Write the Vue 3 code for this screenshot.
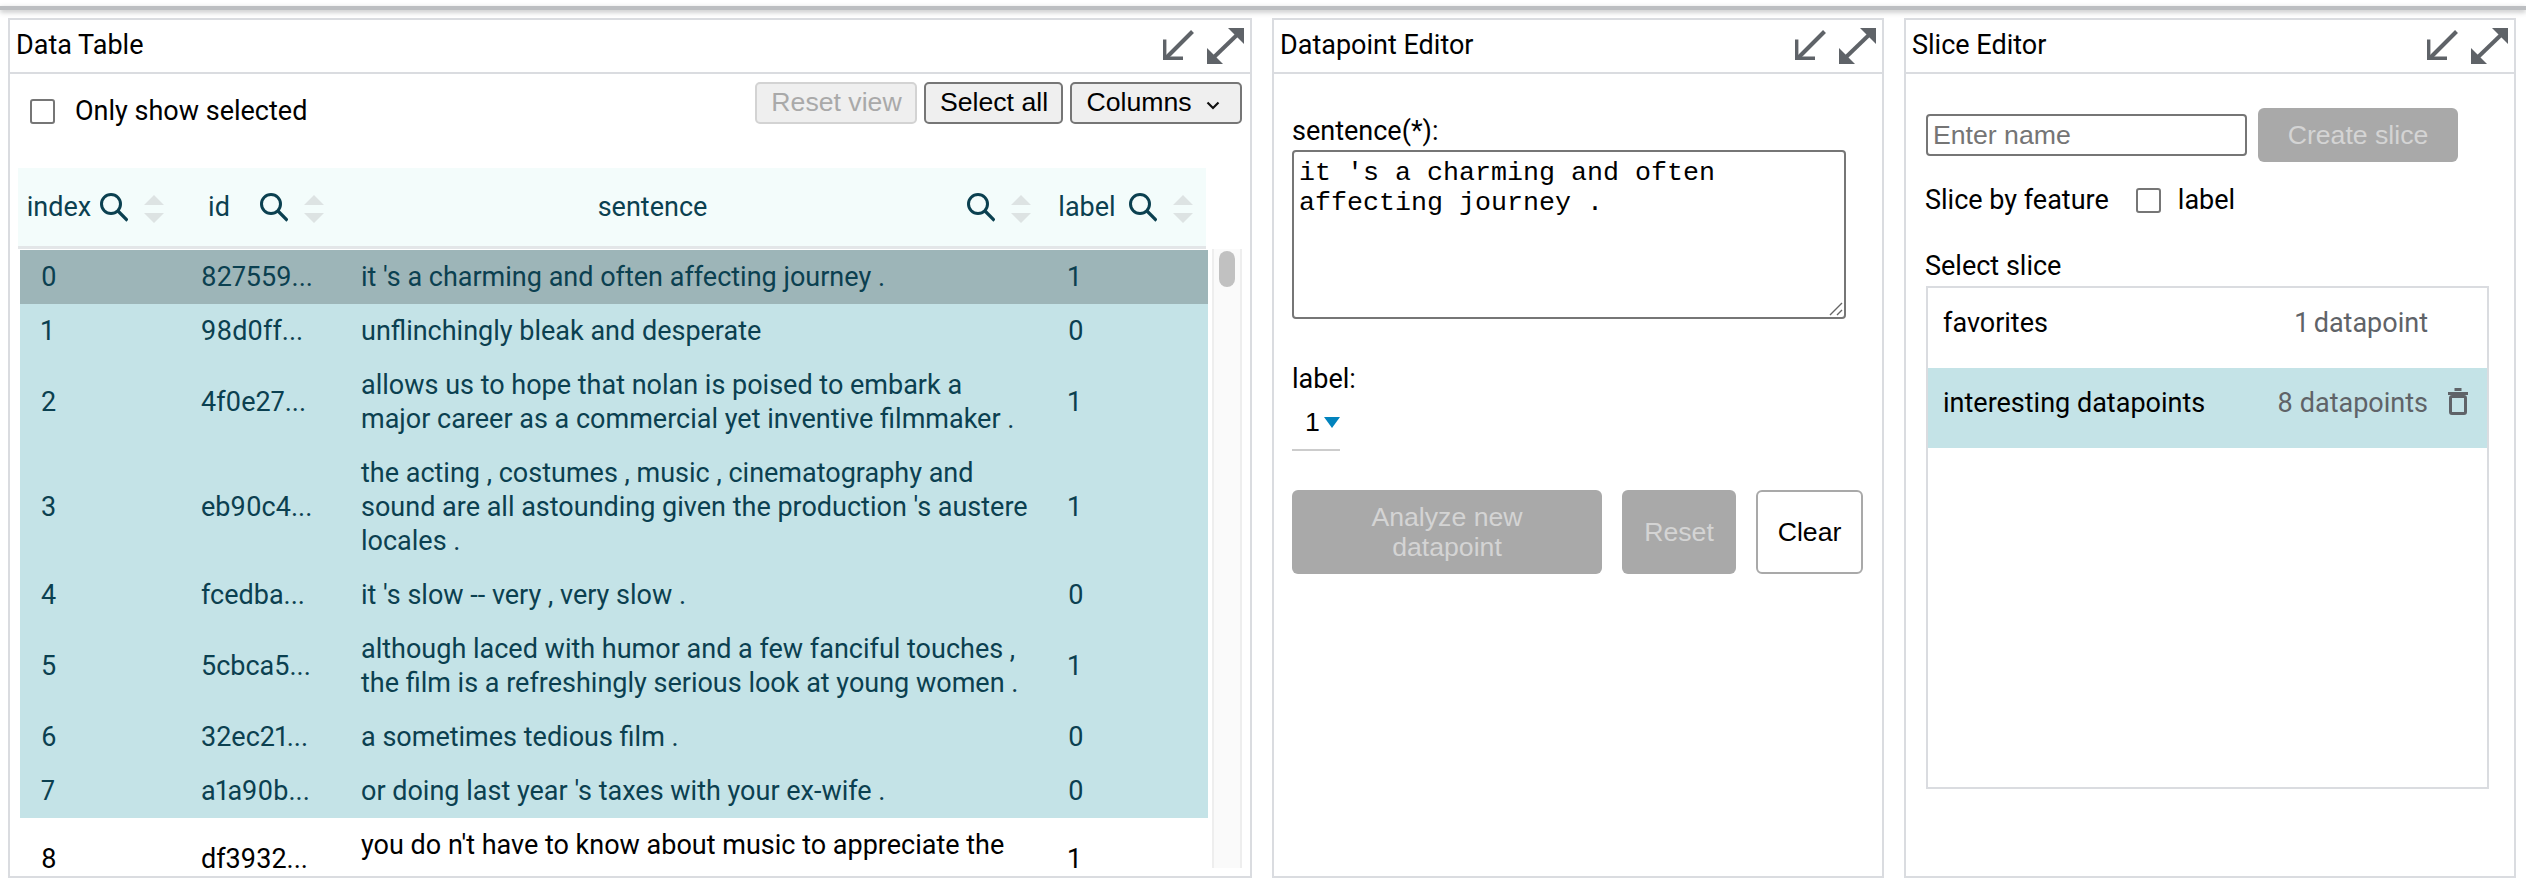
<script setup>
const rows = [
  { i: 0, id: '827559...', s: ["it 's a charming and often affecting journey ."], l: 1, c: 'primary' },
  { i: 1, id: '98d0ff...', s: ['unflinchingly bleak and desperate'], l: 0, c: 'sel' },
  { i: 2, id: '4f0e27...', s: ['allows us to hope that nolan is poised to embark a', 'major career as a commercial yet inventive filmmaker .'], l: 1, c: 'sel' },
  { i: 3, id: 'eb90c4...', s: ['the acting , costumes , music , cinematography and', "sound are all astounding given the production 's austere", 'locales .'], l: 1, c: 'sel' },
  { i: 4, id: 'fcedba...', s: ["it 's slow -- very , very slow ."], l: 0, c: 'sel' },
  { i: 5, id: '5cbca5...', s: ['although laced with humor and a few fanciful touches ,', 'the film is a refreshingly serious look at young women .'], l: 1, c: 'sel' },
  { i: 6, id: '32ec21...', s: ['a sometimes tedious film .'], l: 0, c: 'sel' },
  { i: 7, id: 'a1a90b...', s: ["or doing last year 's taxes with your ex-wife ."], l: 0, c: 'sel' },
  { i: 8, id: 'df3932...', s: ["you do n't have to know about music to appreciate the"], l: 1, c: 'tall' },
]
const cols = ['index', 'id', 'sentence', 'label']
const panels = ['Data Table', 'Datapoint Editor', 'Slice Editor']
</script>

<template>
  <div class="page">
    <div class="topbar"></div>
    <div class="panels">
      <section v-for="(title, p) in panels" :key="title" class="panel" :class="'p' + p">
        <header class="phead">
          <span class="ptitle">{{ title }}</span>
          <span class="picons">
            <svg class="ic-min" viewBox="0 0 31 30"><path d="M29.5 1.5 3 28" fill="none" stroke="#5f6368" stroke-width="4"/><path d="M1.7 9.5v18.8H20" fill="none" stroke="#5f6368" stroke-width="3.4"/></svg>
            <svg class="ic-max" viewBox="0 0 37 36"><path d="M5 31 32 5" fill="none" stroke="#5f6368" stroke-width="4"/><path d="M21 0h16v16zM0 20v16h16z" fill="#5f6368"/></svg>
          </span>
        </header>

        <div v-if="p === 0" class="tbody">
          <div class="toolbar">
            <label class="only"><span class="check"></span><span>Only show selected</span></label>
            <div class="tbtns">
              <button class="gbtn disabled">Reset view</button>
              <button class="gbtn selectall">Select all</button>
              <button class="gbtn columns">Columns
                <svg viewBox="0 0 14 9" class="chev"><path d="M1.5 1.5 7 7l5.5-5.5" fill="none" stroke="#111" stroke-width="2.2"/></svg>
              </button>
            </div>
          </div>
          <div class="thead">
            <div v-for="c in cols" :key="c" class="th">
              <span class="thlabel">{{ c }}</span>
              <svg class="search" viewBox="0 0 28 29"><circle cx="11" cy="11" r="9.5" fill="none" stroke="#0b4050" stroke-width="3"/><path d="M18 18 27.5 27.5" stroke="#0b4050" stroke-width="3.2" fill="none"/></svg>
              <svg class="sort" viewBox="0 0 20 28"><path d="M10 0 20 10H0zM10 28 0 18h20z" fill="#dde3e3"/></svg>
            </div>
          </div>
          <div class="tscroll">
            <div class="rows">
              <div v-for="r in rows" :key="r.i" class="row" :class="r.c">
                <span class="td">{{ r.i }}</span>
                <span class="td">{{ r.id }}</span>
                <span class="td sent"><span v-for="(line, n) in r.s" :key="n" class="line">{{ line }}</span></span>
                <span class="td">{{ r.l }}</span>
              </div>
            </div>
            <div class="track"><div class="thumb"></div></div>
          </div>
        </div>

        <div v-else-if="p === 1" class="dbody">
          <div class="flabel">sentence(*):</div>
          <div class="textarea">
            <div>it 's a charming and often</div>
            <div>affecting journey .</div>
            <svg class="grip" viewBox="0 0 14 14"><path d="M1 13 13 1M8 13l5-5" stroke="#666" stroke-width="1.4" fill="none"/></svg>
          </div>
          <div class="flabel second">label:</div>
          <div class="select"><span class="one">1</span><svg viewBox="0 0 16 11" class="tri"><path d="M0 0h16L8 11z" fill="#0283bd"/></svg></div>
          <div class="dbtns">
            <button class="abtn off analyze">Analyze new<br />datapoint</button>
            <button class="abtn off reset">Reset</button>
            <button class="abtn clear">Clear</button>
          </div>
        </div>

        <div v-else class="sbody">
          <div class="createrow">
            <div class="nameinput">Enter name</div>
            <button class="abtn off create">Create slice</button>
          </div>
          <div class="byfeature"><span>Slice by feature</span><span class="check"></span><span>label</span></div>
          <div class="seltitle">Select slice</div>
          <div class="slist">
            <div class="sitem"><span class="sname">favorites</span><span class="scount">1 datapoint</span><span class="trashslot"></span></div>
            <div class="sitem on"><span class="sname">interesting datapoints</span><span class="scount">8 datapoints</span>
              <svg class="trashslot" viewBox="0 0 20 27"><path d="M6.5 1.5h7M0 5.5h20" stroke="#5f6368" stroke-width="3" fill="none"/><rect x="2.5" y="8.5" width="15" height="17" rx="1.5" fill="none" stroke="#5f6368" stroke-width="3"/></svg>
            </div>
          </div>
        </div>
      </section>
    </div>
  </div>
</template>

<style>
html, body { margin: 0; background: #fff; }
</style>

<style scoped>
.page { width: 2526px; height: 886px; overflow: hidden; font-family: Roboto, "Liberation Sans", sans-serif; font-size: 27px; color: #000; font-variant-numeric: proportional-nums; }
.topbar { height: 4px; margin-top: 6px; background: #bcbec1; box-shadow: 0 2px 5px rgba(60,64,67,.35); }
.panels { display: flex; margin: 8px 0 0 8px; gap: 20px; height: 860px; }
.panel { box-sizing: border-box; height: 860px; border: 2px solid #dadce0; display: flex; flex-direction: column; overflow: hidden; }
.p0 { width: 1244px; }
.p1 { width: 612px; }
.p2 { width: 612px; }
.phead { box-sizing: border-box; height: 54px; flex: none; border-bottom: 2px solid #dadce0; display: flex; justify-content: space-between; align-items: center; padding: 0 6px; }
.ptitle { margin-top: -3px; }
.picons { display: flex; gap: 13px; align-items: center; }
.ic-min { width: 31px; height: 30px; margin-bottom: 2px; }
.ic-max { width: 37px; height: 36px; }

.check { box-sizing: border-box; display: inline-block; width: 25px; height: 25px; border: 2px solid #767676; border-radius: 3px; background: #fff; flex: none; }
.tbody { display: flex; flex-direction: column; flex: 1; min-height: 0; }
.toolbar { display: flex; justify-content: space-between; height: 94px; flex: none; padding: 8px 8px 0 20px; box-sizing: border-box; }
.only { display: flex; align-items: center; gap: 20px; height: 42px; margin-top: 8px; }
.tbtns { display: flex; gap: 7px; height: 42px; }
.gbtn { box-sizing: border-box; width: 162px; height: 42px; padding: 0 0 1px 1px; border: 2px solid #767676; border-radius: 5px; background: #efefef; color: #000; font: 26.67px "Liberation Sans", Arial, sans-serif; display: flex; align-items: center; justify-content: center; }
.gbtn.disabled { border-color: #d3d3d3; color: #a9a9a9; }
.selectall { width: 139px; }
.columns { width: 172px; gap: 14px; padding-right: 6px; padding-left: 0; }
.chev { width: 14px; height: 9px; margin-top: 6px; flex: none; }

.thead { display: grid; grid-template-columns: 160px 160px 707px 159px; width: 1188px; box-sizing: border-box; margin-left: 8px; padding-left: 2px; height: 81px; background: #f3fcfb; border-bottom: 3px solid #e3e6e8; flex: none; color: #0b4050; }
.th { display: flex; align-items: center; padding: 0 16px 0 6px; }
.th:last-child { padding-right: 13px; }
.thlabel { flex: 1; text-align: center; }
.search { width: 28px; height: 29px; margin-left: 8px; margin-top: 1px; flex: none; }
.sort { width: 20px; height: 28px; margin-left: 16px; margin-top: 3px; flex: none; }

.tscroll { display: flex; flex: none; height: 619px; margin-left: 10px; overflow: hidden; }
.rows { width: 1188px; margin-top: 1px; flex: none; }
.row { display: grid; grid-template-columns: 160px 160px 707px 161px; align-items: center; padding: 10px 0; line-height: 34px; }
.td { padding-left: 21px; }
.line { display: block; white-space: nowrap; }
.row.sel { background: #c4e3e7; color: #0b4050; }
.row.primary { background: #9db5b8; color: #0b4050; }
.row.tall { min-height: 62px; }
.row.tall .sent { align-self: start; }
.track { box-sizing: border-box; width: 30px; margin-left: 4px; height: 619px; background: #fafafa; border-left: 2px solid #eee; border-right: 2px solid #eee; padding: 2px 5px; }
.thumb { width: 16px; height: 36px; border-radius: 8px; background: #c1c1c1; }

.dbody { padding: 0 18px; flex: 1; }
.flabel { line-height: 34px; margin-top: 40px; }
.flabel.second { margin-top: 43px; }
.textarea { position: relative; box-sizing: border-box; width: 554px; height: 169px; margin-top: 2px; border: 2px solid #767676; border-radius: 4px; padding: 6px 5px; font: 26.67px/30px "Liberation Mono", monospace; }
.grip { position: absolute; right: 1px; bottom: 1px; width: 14px; height: 14px; }
.select { box-sizing: border-box; width: 48px; height: 50px; padding: 3px 0 8px 13px; margin-top: 5px; display: flex; align-items: center; gap: 4px; border-bottom: 2px solid #ccc; font: 26.67px "Liberation Sans", sans-serif; }
.tri { width: 16px; height: 11px; flex: none; }
.dbtns { display: flex; gap: 20px; margin-top: 39px; }
.abtn { box-sizing: border-box; height: 84px; border-radius: 6px; border: 0; font: 26.67px/30px "Liberation Sans", sans-serif; padding: 0; }
.abtn.off { background: #a9a9a9; color: #d4d4d4; }
.analyze { width: 310px; }
.reset { width: 114px; }
.clear { width: 107px; background: #fff; border: 2px solid #a9a9a9; color: #000; }

.sbody { padding: 0 20px; flex: 1; display: flex; flex-direction: column; }
.createrow { display: flex; align-items: center; margin-top: 34px; gap: 11px; }
.nameinput { box-sizing: border-box; width: 321px; height: 42px; border: 2px solid #767676; border-radius: 4px; padding: 0 5px; color: #757575; font: 26.67px/38px "Liberation Sans", sans-serif; }
.create { width: 200px; height: 54px; }
.byfeature { display: flex; align-items: center; gap: 19px; height: 34px; margin: 21px 0 0 -1px; }
.byfeature .check { margin: 0 -2px 0 8px; }
.seltitle { line-height: 34px; margin: 32px 0 0 -1px; }
.slist { box-sizing: border-box; width: 563px; height: 503px; border: 2px solid #dadce0; margin-top: 3px; }
.sitem { box-sizing: border-box; display: flex; align-items: center; height: 80px; padding: 0 19px 10px 15px; }
.sname { flex: 1; }
.scount { color: #5f6368; }
.trashslot { width: 20px; height: 27px; margin-left: 20px; margin-top: -3px; flex: none; }
.sitem.on { background: #c4e3e7; }
</style>
